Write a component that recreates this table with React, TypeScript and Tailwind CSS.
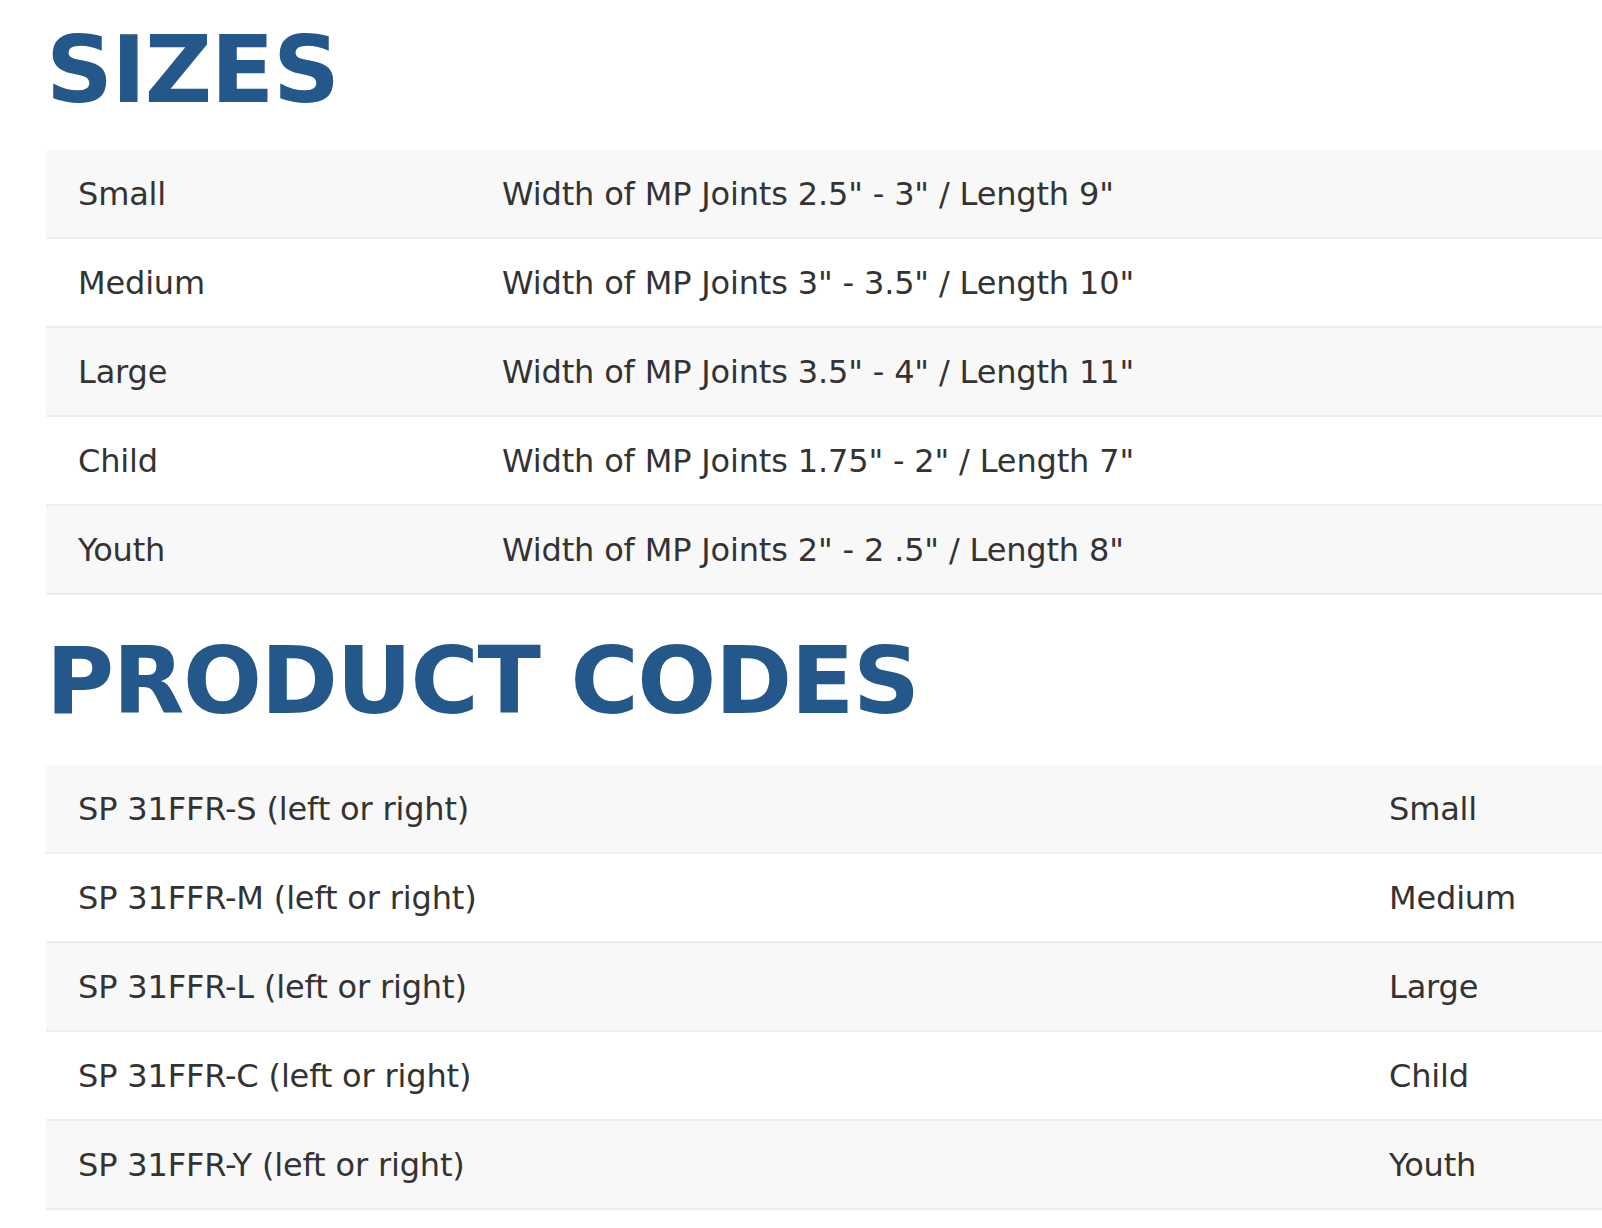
const sizes = [
  ['Small', 'Width of MP Joints 2.5" - 3" / Length 9"'],
  ['Medium', 'Width of MP Joints 3" - 3.5" / Length 10"'],
  ['Large', 'Width of MP Joints 3.5" - 4" / Length 11"'],
  ['Child', 'Width of MP Joints 1.75" - 2" / Length 7"'],
  ['Youth', 'Width of MP Joints 2" - 2 .5" / Length 8"'],
];

const codes = [
  ['SP 31FFR-S (left or right)', 'Small'],
  ['SP 31FFR-M (left or right)', 'Medium'],
  ['SP 31FFR-L (left or right)', 'Large'],
  ['SP 31FFR-C (left or right)', 'Child'],
  ['SP 31FFR-Y (left or right)', 'Youth'],
];

function Table({ rows, firstCol }: { rows: string[][]; firstCol: string }) {
  return (
    <div className="w-[1700px]">
      {rows.map(([a, b], i) => (
        <div
          key={a}
          className={`flex h-[89px] items-center border-b-2 border-[#eeeeee] ${i % 2 === 0 ? 'bg-[#f8f8f8]' : 'bg-white'}`}
        >
          <div className={`${firstCol} shrink-0 px-8`}>{a}</div>
          <div className="px-8">{b}</div>
        </div>
      ))}
    </div>
  );
}

export default function App() {
  return (
    <div className="min-h-screen overflow-hidden bg-white pl-[46px] text-[#333333] text-[32px] -tracking-[0.005em] font-['DejaVu_Sans',sans-serif]">
      <h2 className="h-[150px] pt-[19px] text-[93px] font-bold leading-[1.1] text-[#24578a] -tracking-[0.015em]">
        SIZES
      </h2>
      <Table rows={sizes} firstCol="w-[424px]" />
      <h2 className="h-[170px] pt-[35px] text-[93px] font-bold leading-[1.1] text-[#24578a] -tracking-[0.015em]">
        PRODUCT CODES
      </h2>
      <Table rows={codes} firstCol="w-[1311px]" />
    </div>
  );
}
